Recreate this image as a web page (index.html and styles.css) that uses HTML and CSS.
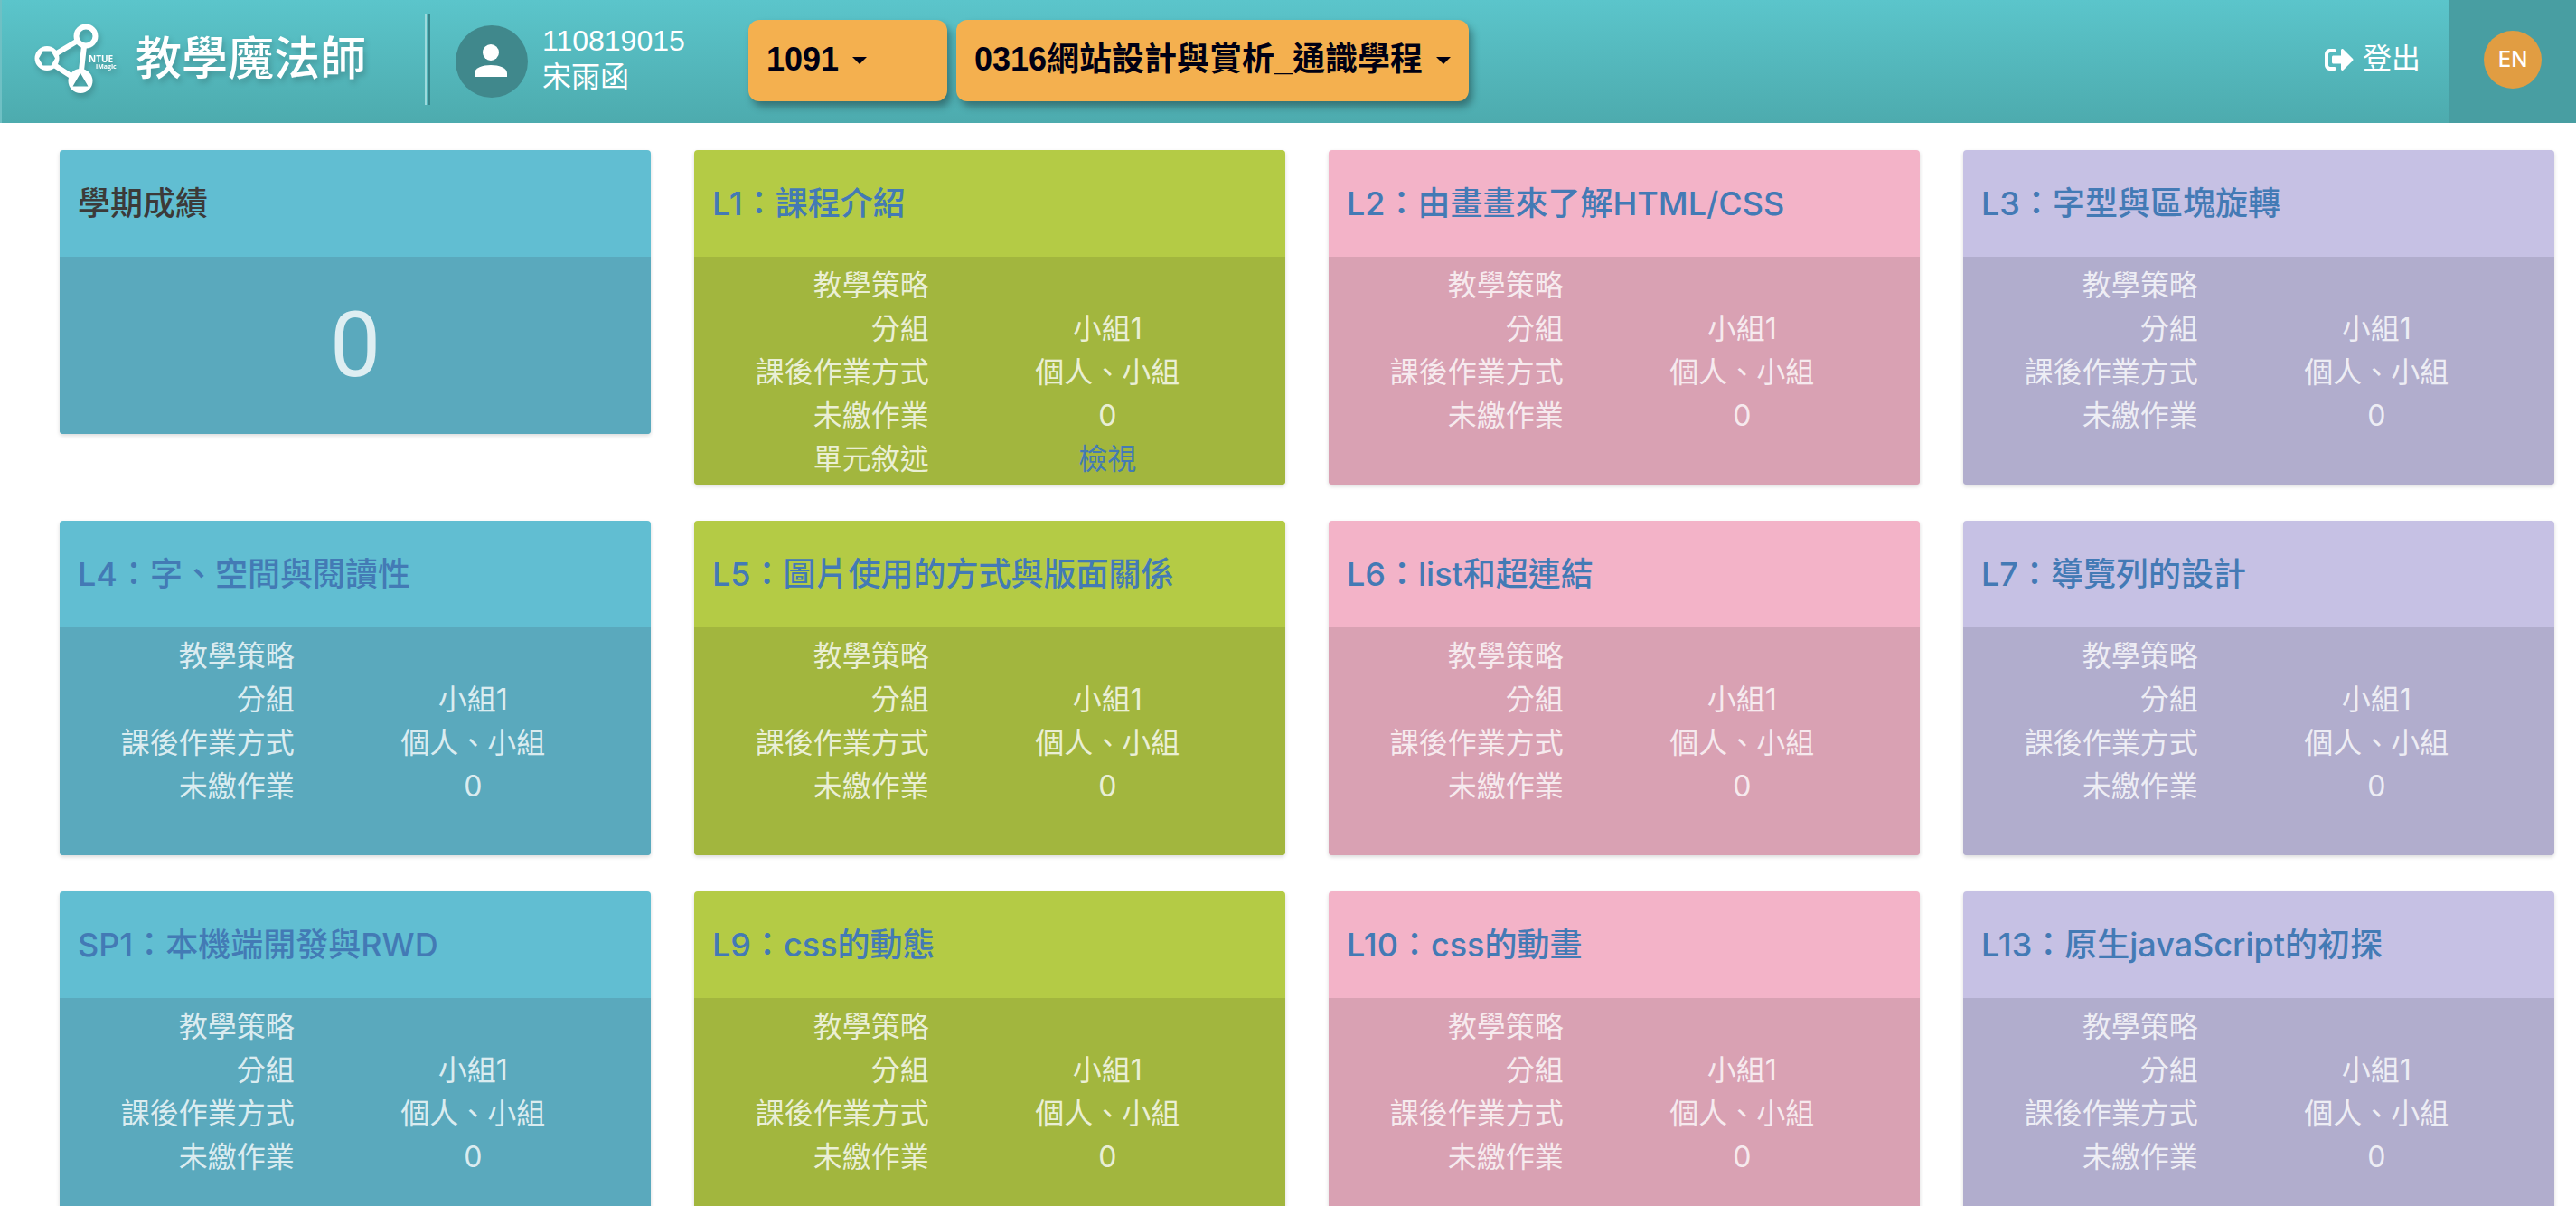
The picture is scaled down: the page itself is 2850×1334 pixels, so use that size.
FILE: index.html
```html
<!DOCTYPE html>
<html lang="zh-Hant">
<head>
<meta charset="utf-8">
<meta name="viewport" content="width=device-width, initial-scale=1">
<title>教學魔法師</title>
<link rel="stylesheet" href="styles.css">
</head>
<body>
<header class="topbar">
  <a class="brand" href="#">
    <svg class="brand-mark" viewBox="0 0 92 80" aria-hidden="true">
      <g fill="none" stroke="#fff" stroke-width="6">
        <path d="M23 34 48 19M55 25 52 52M22 46 42 59"/>
        <circle cx="57" cy="14" r="10.5"/>
      </g>
      <path fill="#fff" fill-rule="evenodd" d="M0.500 38.500a13.500 13.500 0 1 1 27 0a13.500 13.500 0 1 1-27 0M9.500 30.500 5 38.500 9.500 46.500H18.500L23 38.500 18.500 30.500Z"/>
      <path fill="#fff" fill-rule="evenodd" d="M37.500 63.500a13.500 13.500 0 1 1 27 0a13.500 13.500 0 1 1-27 0M51 55 42.500 69.500H59.500Z"/>
      <text class="mark-text" x="60" y="43" font-size="10">NTUE</text>
      <text class="mark-text" x="68" y="50" font-size="7">iMagic</text>
    </svg>
    <span class="brand-name">教學魔法師</span>
  </a>
  <div class="user">
    <svg class="avatar" viewBox="0 0 80 80" aria-hidden="true">
      <circle cx="40" cy="40" r="40" fill="#40888c"/>
      <circle cx="39" cy="30" r="9" fill="#fff"/>
      <path fill="#fff" d="M21 57v-4c0-6 9-9 18-9s18 3 18 9v4z"/>
    </svg>
    <div class="user-text"><div>110819015</div><div>宋雨函</div></div>
  </div>
  <div class="pickers">
    <div class="picker picker-term">
      <select aria-label="學期"><option>1091</option></select>
      <svg class="caret" viewBox="0 0 16 8" aria-hidden="true"><path d="M0 0H16L8 8Z"/></svg>
    </div>
    <div class="picker">
      <select aria-label="課程"><option>0316網站設計與賞析_通識學程</option></select>
      <svg class="caret" viewBox="0 0 16 8" aria-hidden="true"><path d="M0 0H16L8 8Z"/></svg>
    </div>
  </div>
  <a class="logout" href="#">
    <svg class="logout-icon" viewBox="0 0 512 384" aria-hidden="true"><path fill="#fff" d="M497 209 329 377c-15 15-41 4.500-41-17v-96H152c-13.300 0-24-10.700-24-24v-96c0-13.300 10.700-24 24-24h136V24c0-21.400 25.900-32 41-17l168 168c9.300 9.400 9.300 24.600 0 34zM192 372v-40c0-6.600-5.400-12-12-12H96c-17.700 0-32-14.300-32-32V96c0-17.700 14.300-32 32-32h84c6.600 0 12-5.400 12-12V12c0-6.600-5.400-12-12-12H96C43 0 0 43 0 96v192c0 53 43 96 96 96h84c6.600 0 12-5.400 12-12z"/></svg>
    <span>登出</span>
  </a>
  <div class="lang"><button class="lang-button" type="button">EN</button></div>
</header>
<main class="cards">
  <section class="card card-score blue">
    <h2 class="card-title">學期成績</h2>
    <div class="score">0</div>
  </section>
  <section class="card green">
    <h2 class="card-title"><a href="#">L1：課程介紹</a></h2>
    <dl class="facts"><dt>教學策略</dt><dd></dd><dt>分組</dt><dd>小組1</dd><dt>課後作業方式</dt><dd>個人、小組</dd><dt>未繳作業</dt><dd>0</dd><dt>單元敘述</dt><dd><a href="#">檢視</a></dd></dl>
  </section>
  <section class="card pink">
    <h2 class="card-title"><a href="#">L2：由畫畫來了解HTML/CSS</a></h2>
    <dl class="facts"><dt>教學策略</dt><dd></dd><dt>分組</dt><dd>小組1</dd><dt>課後作業方式</dt><dd>個人、小組</dd><dt>未繳作業</dt><dd>0</dd></dl>
  </section>
  <section class="card purple">
    <h2 class="card-title"><a href="#">L3：字型與區塊旋轉</a></h2>
    <dl class="facts"><dt>教學策略</dt><dd></dd><dt>分組</dt><dd>小組1</dd><dt>課後作業方式</dt><dd>個人、小組</dd><dt>未繳作業</dt><dd>0</dd></dl>
  </section>
  <section class="card blue">
    <h2 class="card-title"><a href="#">L4：字、空間與閱讀性</a></h2>
    <dl class="facts"><dt>教學策略</dt><dd></dd><dt>分組</dt><dd>小組1</dd><dt>課後作業方式</dt><dd>個人、小組</dd><dt>未繳作業</dt><dd>0</dd></dl>
  </section>
  <section class="card green">
    <h2 class="card-title"><a href="#">L5：圖片使用的方式與版面關係</a></h2>
    <dl class="facts"><dt>教學策略</dt><dd></dd><dt>分組</dt><dd>小組1</dd><dt>課後作業方式</dt><dd>個人、小組</dd><dt>未繳作業</dt><dd>0</dd></dl>
  </section>
  <section class="card pink">
    <h2 class="card-title"><a href="#">L6：list和超連結</a></h2>
    <dl class="facts"><dt>教學策略</dt><dd></dd><dt>分組</dt><dd>小組1</dd><dt>課後作業方式</dt><dd>個人、小組</dd><dt>未繳作業</dt><dd>0</dd></dl>
  </section>
  <section class="card purple">
    <h2 class="card-title"><a href="#">L7：導覽列的設計</a></h2>
    <dl class="facts"><dt>教學策略</dt><dd></dd><dt>分組</dt><dd>小組1</dd><dt>課後作業方式</dt><dd>個人、小組</dd><dt>未繳作業</dt><dd>0</dd></dl>
  </section>
  <section class="card blue">
    <h2 class="card-title"><a href="#">SP1：本機端開發與RWD</a></h2>
    <dl class="facts"><dt>教學策略</dt><dd></dd><dt>分組</dt><dd>小組1</dd><dt>課後作業方式</dt><dd>個人、小組</dd><dt>未繳作業</dt><dd>0</dd></dl>
  </section>
  <section class="card green">
    <h2 class="card-title"><a href="#">L9：css的動態</a></h2>
    <dl class="facts"><dt>教學策略</dt><dd></dd><dt>分組</dt><dd>小組1</dd><dt>課後作業方式</dt><dd>個人、小組</dd><dt>未繳作業</dt><dd>0</dd></dl>
  </section>
  <section class="card pink">
    <h2 class="card-title"><a href="#">L10：css的動畫</a></h2>
    <dl class="facts"><dt>教學策略</dt><dd></dd><dt>分組</dt><dd>小組1</dd><dt>課後作業方式</dt><dd>個人、小組</dd><dt>未繳作業</dt><dd>0</dd></dl>
  </section>
  <section class="card purple">
    <h2 class="card-title"><a href="#">L13：原生javaScript的初探</a></h2>
    <dl class="facts"><dt>教學策略</dt><dd></dd><dt>分組</dt><dd>小組1</dd><dt>課後作業方式</dt><dd>個人、小組</dd><dt>未繳作業</dt><dd>0</dd></dl>
  </section>
</main>
</body>
</html>
```
FILE: styles.css
```css
* {
  box-sizing: border-box;
}

html {
  scrollbar-width: none;
}

body {
  margin: 0;
  background: #fff;
  font-family: Inter, "Noto Sans CJK TC", sans-serif;
  font-size: 32px;
}

a {
  color: #437ab5;
  text-decoration: none;
}

/* Top bar */
.topbar {
  display: flex;
  align-items: center;
  height: 136px;
  padding-left: 36px;
  border-left: 2px solid #6fc0c4;
  background: linear-gradient(#5bc5cb, #4dabae);
  color: #fff;
  font-family: "Liberation Sans", "Noto Sans CJK TC", sans-serif;
}

.brand {
  display: flex;
  align-items: center;
  gap: 20px;
  width: 432px;
  height: 100px;
  margin-bottom: 4px;
  color: #fff;
  filter: drop-shadow(2px 4px 3px rgba(0, 0, 0, 0.2));
}

.brand-mark {
  width: 92px;
  height: 80px;
}

.mark-text {
  fill: #fff;
  font-family: "Open Sans", sans-serif;
  font-weight: 700;
}

.brand-name {
  font-size: 51px;
  font-weight: 500;
  line-height: 64px;
}

.user {
  display: flex;
  align-items: center;
  gap: 16px;
  width: 358px;
  height: 100px;
  margin-bottom: 4px;
  padding: 4px 0 0 32px;
  border-left: 2px solid #9ddadd;
  box-shadow: inset 2px 0 #52b6bb, inset 4px 0 #388489;
}

.avatar {
  width: 80px;
  height: 80px;
}

.user-text {
  padding-bottom: 6px;
  line-height: 40px;
}

.pickers {
  display: flex;
  gap: 10px;
  margin-bottom: 2px;
}

.picker {
  display: flex;
  align-items: center;
  gap: 14px;
  height: 90px;
  padding: 0 20px;
  border-radius: 12px;
  background: #f4b04f;
  box-shadow: 4px 6px 8px rgba(0, 0, 0, 0.35);
}

.picker-term {
  width: 220px;
}

.picker select {
  appearance: none;
  padding: 0 0 2px;
  border: 0;
  background: transparent;
  color: #000014;
  font: 700 36px/48px "Liberation Sans", "Noto Sans CJK TC", sans-serif;
}

.caret {
  width: 16px;
  height: 8px;
  fill: #000014;
}

.logout {
  display: flex;
  align-items: center;
  gap: 10px;
  margin: 0 0 4px auto;
  padding: 0 32px;
  color: #fff;
  line-height: 40px;
}

.logout span {
  padding-bottom: 2px;
}

.logout-icon {
  width: 32px;
  height: 24px;
}

.lang {
  display: flex;
  align-items: center;
  justify-content: center;
  width: 140px;
  height: 136px;
  padding-bottom: 4px;
  background: #489ea2;
}

.lang-button {
  width: 64px;
  height: 64px;
  padding: 0;
  border: 0;
  border-radius: 50%;
  background: #e19d42;
  color: #fff;
  font: 500 24px/32px Inter, sans-serif;
}

/* Course cards */
.cards {
  display: grid;
  grid-template-columns: repeat(4, 1fr);
  gap: 40px 48px;
  padding: 30px 24px 40px 66px;
}

.card {
  display: flex;
  flex-direction: column;
  overflow: hidden;
  border-radius: 4px;
  box-shadow: 0 2px 4px rgba(0, 0, 0, 0.15);
}

.card-score {
  align-self: start;
}

.card-title {
  margin: 0;
  padding: 35px 20px;
  color: #3c3a39;
  font-size: 36px;
  font-weight: 500;
  line-height: 48px;
}

.score {
  color: rgba(255, 255, 255, 0.8);
  font-family: Roboto, sans-serif;
  font-size: 100px;
  line-height: 196px;
  text-align: center;
}

.facts {
  display: grid;
  grid-template-columns: 15fr 22fr;
  grid-auto-rows: 48px;
  column-gap: 30px;
  min-height: 252px;
  margin: 0;
  padding: 8px 29px 4px 31px;
  color: rgba(255, 255, 255, 0.8);
  line-height: 48px;
}

.facts dt {
  text-align: right;
}

.facts dd {
  margin: 0;
  text-align: center;
}

.blue {
  background: #61bed2;
}

.blue .facts,
.blue .score {
  background: #5aa9bd;
}

.green {
  background: #b4cb45;
}

.green .facts {
  background: #a2b63e;
}

.pink {
  background: #f3b3c8;
}

.pink .facts {
  background: #d9a1b3;
}

.purple {
  background: #c6c1e4;
}

.purple .facts {
  background: #b1adcd;
}
```
